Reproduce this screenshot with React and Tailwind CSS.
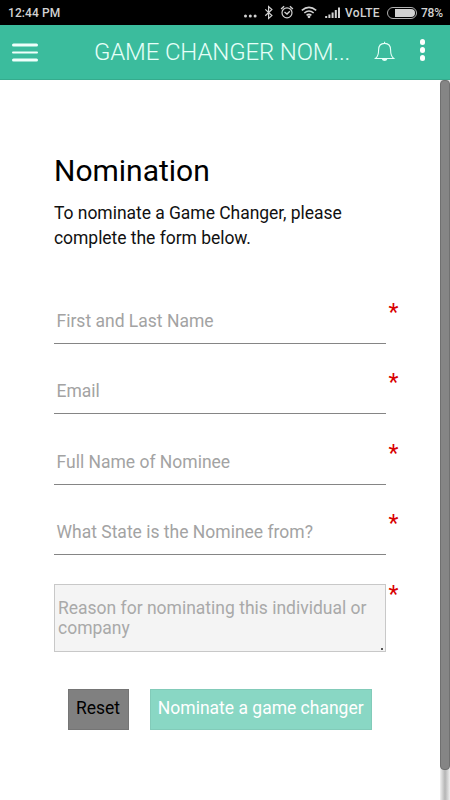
import React from "react";

function StatusBar() {
  return (
    <div className="flex h-[25px] items-center bg-black pl-[8px] text-[12px] leading-[25px] font-medium text-[#d2d2d2]">
      <span className="w-[236px] pt-px tracking-[0.1px]">12:44 PM</span>
      <svg width="104" height="25" viewBox="244 0 104 25" className="shrink-0" fill="none" stroke="#d2d2d2">
        <g fill="#d2d2d2" stroke="none">
          <circle cx="245.5" cy="16" r="1.5" />
          <circle cx="250.3" cy="16" r="1.5" />
          <circle cx="255.1" cy="16" r="1.5" />
        </g>
        <path d="M265.3 9.4l6.6 6.2-3.3 2.9V6.6l3.3 2.9-6.6 6.2" strokeWidth="1.2" />
        <circle cx="287" cy="12.8" r="5" strokeWidth="1.2" />
        <path d="M284.5 12l2.5 2 2.8-2.7M281.1 8.9l3-2.7M292.9 8.9l-3-2.7" strokeWidth="1.4" />
        <path d="M301.8 10.4q7.2-6 14.4 0M304.3 13q4.7-4 9.4 0M306.6 15.4q2.4-2 4.8 0" strokeWidth="1.6" />
        <circle cx="309" cy="16.8" r="1.4" fill="#d2d2d2" stroke="none" />
        <path d="M326.2 18v-2M329.4 18v-3.5M332.6 18v-5.5M335.8 18v-8M339 18v-10.5" strokeWidth="2" />
      </svg>
      <span className="-ml-[3px] w-[41px] pt-px tracking-[0.3px]">VoLTE</span>
      <div className="ml-[1px] flex h-[12px] w-[30px] justify-end rounded-full border border-[#b0b0b0] p-[1px]">
        <div className="w-[20px] rounded-r-full bg-[#d2d2d2]" />
      </div>
      <span className="ml-[4px] pt-px tracking-[-0.2px]">78%</span>
    </div>
  );
}

function AppBar() {
  return (
    <header className="flex h-[55px] items-center border-b border-[#35ab8d] bg-[#3bbc9d] pl-[12px]">
      <div className="flex w-[26px] translate-y-[0.5px] flex-col gap-[5px]">
        <div className="h-[2.6px] rounded-full bg-[#effffb]" />
        <div className="h-[2.6px] rounded-full bg-[#effffb]" />
        <div className="h-[2.6px] rounded-full bg-[#effffb]" />
      </div>
      <h1 className="ml-[56px] w-[264px] text-[24px] leading-[54px] font-light tracking-[-0.15px] whitespace-nowrap text-[#e6fff8]">
        GAME CHANGER NOM...
      </h1>
      <svg width="22" height="24" viewBox="0 0 22 24" className="ml-[16px] shrink-0 -translate-y-px" fill="none" stroke="#e6fff8" strokeWidth="1.1">
        <path d="M1.5 19.5C4 17.5 4.6 15.5 4.6 11c0-4 2.2-6.6 6-6.6s6 2.6 6 6.6c0 4.5 .6 6.5 3.1 8.5zM10.6 4.4V2.7" />
        <path d="M7.8 20h5.6q-.6 2-2.8 2t-2.8-2" fill="#e6fff8" stroke="none" />
      </svg>
      <div className="ml-[24px] flex -translate-y-[2px] flex-col gap-[2.6px]">
        <div className="size-[5.4px] rounded-full bg-white" />
        <div className="size-[5.4px] rounded-full bg-white" />
        <div className="size-[5.4px] rounded-full bg-white" />
      </div>
    </header>
  );
}

function Asterisk() {
  return <span className="ml-[2.5px] text-[23px] leading-[26px] text-[#d80000]">*</span>;
}

function Field({ label }) {
  return (
    <div className="flex h-[70.4px] items-start">
      <div className="flex h-[44px] w-[332px] border-b border-[#858585] pl-[2.5px] text-[17.5px] leading-[42px] text-[#a3a3a3]">
        {label}
      </div>
      <Asterisk />
    </div>
  );
}

export default function App() {
  return (
    <div className="flex h-[800px] w-[450px] flex-col overflow-hidden bg-white font-[Roboto,sans-serif]">
      <StatusBar />
      <AppBar />
      <div className="flex flex-1">
        <main className="w-[440px] pl-[54px]">
          <h2 className="pt-[71px] text-[30px] leading-[40px] text-black">Nomination</h2>
          <p className="mt-[10px] text-[17.5px] leading-[25px] tracking-[-0.04px] text-[#111]">
            To nominate a Game Changer, please
            <br />
            complete the form below.
          </p>
          <form className="mt-[49px]">
            <Field label="First and Last Name" />
            <Field label="Email" />
            <Field label="Full Name of Nominee" />
            <Field label="What State is the Nominee from?" />
            <div className="flex h-[68px] items-start">
              <div className="mt-[2px] flex h-[68px] w-[332px] shrink-0 items-end justify-between border border-[#c8c8c8] bg-[#f4f4f4] pl-[3px]">
                <p className="self-start pt-[13px] text-[17.5px] leading-[20px] whitespace-nowrap text-[#a9a9a9]">
                  Reason for nominating this individual or
                  <br />
                  company
                </p>
                <div className="mr-[2px] mb-[1px] size-[2px] shrink-0 bg-[#555]" />
              </div>
              <Asterisk />
            </div>
            <div className="mt-[39px] ml-[13.5px] flex gap-[21px] text-[17.5px] leading-[36px]">
              <button type="button" className="h-[41px] w-[61px] border border-[#757575] bg-[#808080] pb-[2px] text-black">
                Reset
              </button>
              <button type="button" className="h-[41px] w-[222.5px] border border-[#82cbb9] bg-[#89d7c4] pb-[2px] whitespace-nowrap text-white">
                Nominate a game changer
              </button>
            </div>
          </form>
        </main>
        <div className="flex w-[10px] flex-col bg-gradient-to-r from-[#f0f0f0] via-[#b5b5b5] to-[#eeeeee]">
          <div className="h-[690px] rounded-[4px] border border-[#707070] bg-[#858585]" />
        </div>
      </div>
    </div>
  );
}
